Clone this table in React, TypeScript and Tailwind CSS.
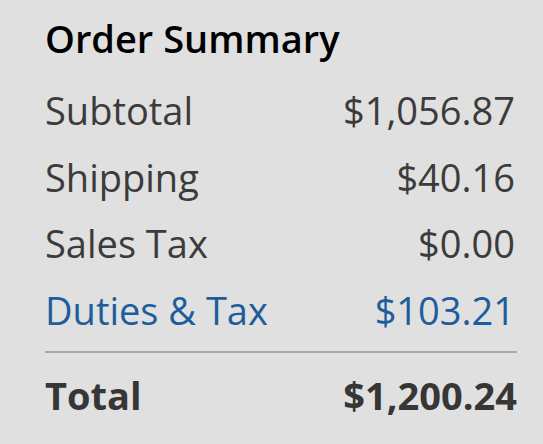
import React from 'react';

const rows = [
  { label: 'Subtotal', value: '$1,056.87' },
  { label: 'Shipping', value: '$40.16' },
  { label: 'Sales Tax', value: '$0.00' },
  { label: 'Duties & Tax', value: '$103.21', link: true },
];

export default function App() {
  return (
    <div className="min-h-screen w-full bg-[#e0e0e0] font-['Open_Sans',sans-serif]">
      <div className="ml-[45px] w-[472px] pt-[13px]">
        {/* Header */}
        <h2 className="mb-[14px] text-[38px] leading-[50px] font-semibold text-black">Order Summary</h2>

        {/* Line items */}
        <div className="flex flex-col">
          {rows.map((row) => (
            <div
              key={row.label}
              className={`flex items-center justify-between text-[38px] leading-[66.5px] ${
                row.link ? 'text-[#1d5d9b]' : 'text-[#3b3b3b]'
              }`}
            >
              <span>{row.label}</span>
              <span className="pr-[2px]">{row.value}</span>
            </div>
          ))}
        </div>

        {/* Total */}
        <div className="mt-[8px] border-t-2 border-[#a9a9a9] pt-[9px]">
          <div className="flex items-center justify-between text-[38px] leading-[66px] font-bold text-[#363636]">
            <span>Total</span>
            <span>$1,200.24</span>
          </div>
        </div>
      </div>
    </div>
  );
}
